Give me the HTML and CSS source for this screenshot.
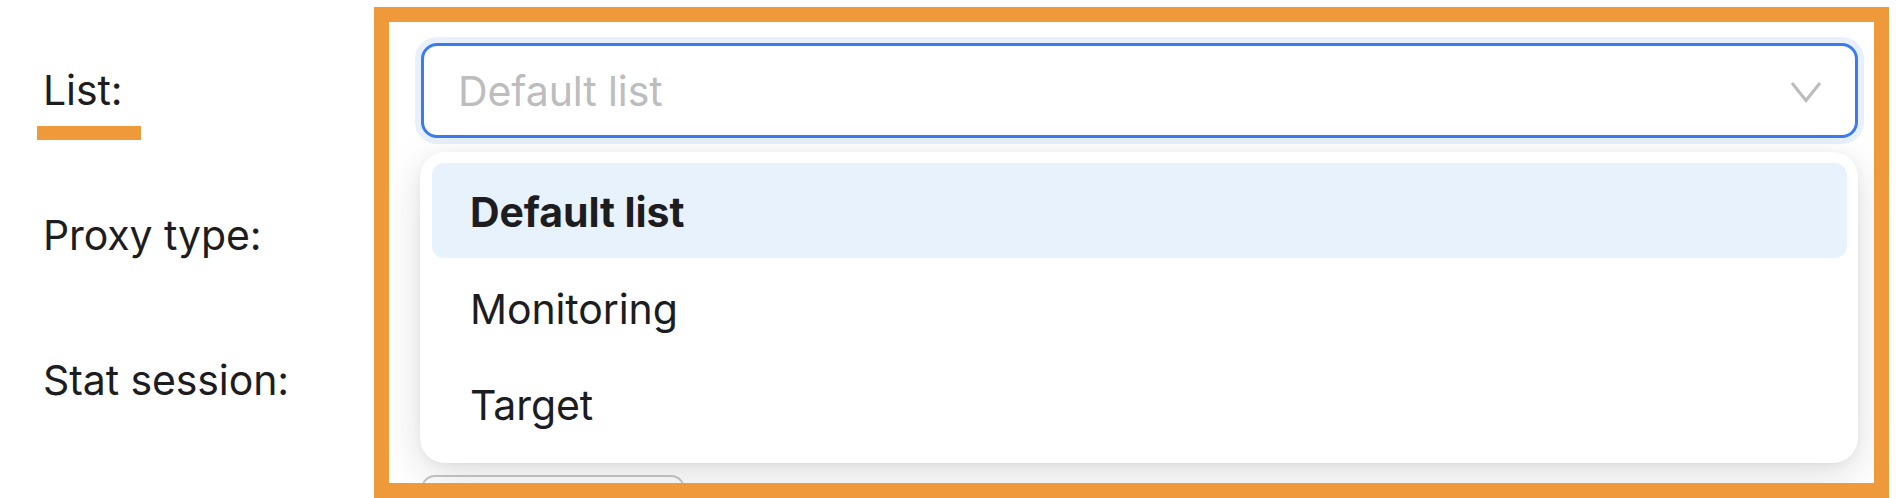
FILE: index.html
```html
<!DOCTYPE html>
<html lang="en">
<head>
<meta charset="utf-8">
<title>List select</title>
<link rel="stylesheet" href="styles.css">
</head>
<body>
<div class="page">
  <form class="form">
    <div class="row">
      <label class="label label-marked">List:</label>
      <div class="control">
        <div class="select is-open">
          <span class="placeholder">Default list</span>
          <svg class="chevron" width="32" height="22" viewBox="0 0 32 22"><polyline points="2,2 16,19.5 30,2" fill="none" stroke="#bcbcbc" stroke-width="3" stroke-linejoin="miter"/></svg>
        </div>
        <ul class="menu">
          <li class="menu-item is-active">Default list</li>
          <li class="menu-item">Monitoring</li>
          <li class="menu-item">Target</li>
        </ul>
      </div>
    </div>
    <div class="row">
      <label class="label">Proxy type:</label>
      <div class="control"><div class="select"></div></div>
    </div>
    <div class="row">
      <label class="label">Stat session:</label>
      <div class="control"><div class="select"></div></div>
    </div>
    <div class="row">
      <span class="label-empty"></span>
      <div class="control"><button type="button" class="button" aria-label="Save"></button></div>
    </div>
  </form>
  <div class="annotation-frame"></div>
</div>
</body>
</html>
```
FILE: styles.css
```css
html, body {
  margin: 0;
  padding: 0;
  background: #ffffff;
}
body {
  font-family: Inter, "Noto Sans", "Liberation Sans", sans-serif;
  color: #1d1d1f;
  overflow: hidden;
  height: 498px;
}
.page {
  position: relative;
  width: 1896px;
  height: 498px;
  overflow: hidden;
}
.form {
  display: grid;
  grid-template-columns: 378px 1437px;
  grid-template-rows: 95px 95px 95px 20px;
  row-gap: 50px;
  padding: 43px 0 0 43px;
  margin: 0;
}
.row {
  display: contents;
}
.label {
  position: relative;
  font-size: 41px;
  line-height: 95px;
  letter-spacing: -0.1px;
  white-space: nowrap;
}
.label-marked::after {
  content: "";
  position: absolute;
  left: -6px;
  top: 83px;
  width: 104px;
  height: 14px;
  background: #ee9a3a;
}
.control {
  position: relative;
}
.select {
  box-sizing: border-box;
  height: 95px;
  border: 2px solid #d6d6d6;
  border-radius: 16px;
  background: #fff;
  display: flex;
  align-items: center;
  padding: 0 34px 0 35px;
}
.select.is-open {
  border: 3px solid #3a7bf2;
  padding-left: 34px;
  padding-right: 33px;
  box-shadow: 0 0 0 6px #e8f0fc;
}
.placeholder {
  flex: 1;
  font-size: 41px;
  color: #bdbdbd;
  letter-spacing: -0.1px;
}
.chevron {
  display: block;
  margin-top: 2px;
}
.menu {
  position: absolute;
  z-index: 2;
  left: -1px;
  top: 109px;
  width: 1438px;
  box-sizing: border-box;
  margin: 0;
  padding: 11px 11px 12px 12px;
  list-style: none;
  background: #fff;
  border-radius: 25px;
  box-shadow: 0 12px 44px rgba(0, 0, 0, 0.13), 0 2px 10px rgba(0, 0, 0, 0.05);
}
.menu-item {
  height: 96px;
  display: flex;
  align-items: center;
  padding: 3px 0 0 38px;
  box-sizing: border-box;
  font-size: 41px;
  letter-spacing: -0.1px;
  border-radius: 12px;
}
.menu-item.is-active {
  height: 95px;
  margin-bottom: 1px;
  background: #e8f2fd;
  font-weight: 700;
}
.button {
  display: block;
  margin-top: -3px;
  width: 264px;
  height: 23px;
  border: 2px solid #c8c8c8;
  border-bottom: 0;
  border-radius: 14px 14px 0 0;
  background: #fff;
  padding: 0;
}
.annotation-frame {
  position: absolute;
  z-index: 5;
  left: 374px;
  top: 7px;
  width: 1515px;
  height: 491px;
  box-sizing: border-box;
  border: 15px solid #ee9a3a;
  pointer-events: none;
}
```
